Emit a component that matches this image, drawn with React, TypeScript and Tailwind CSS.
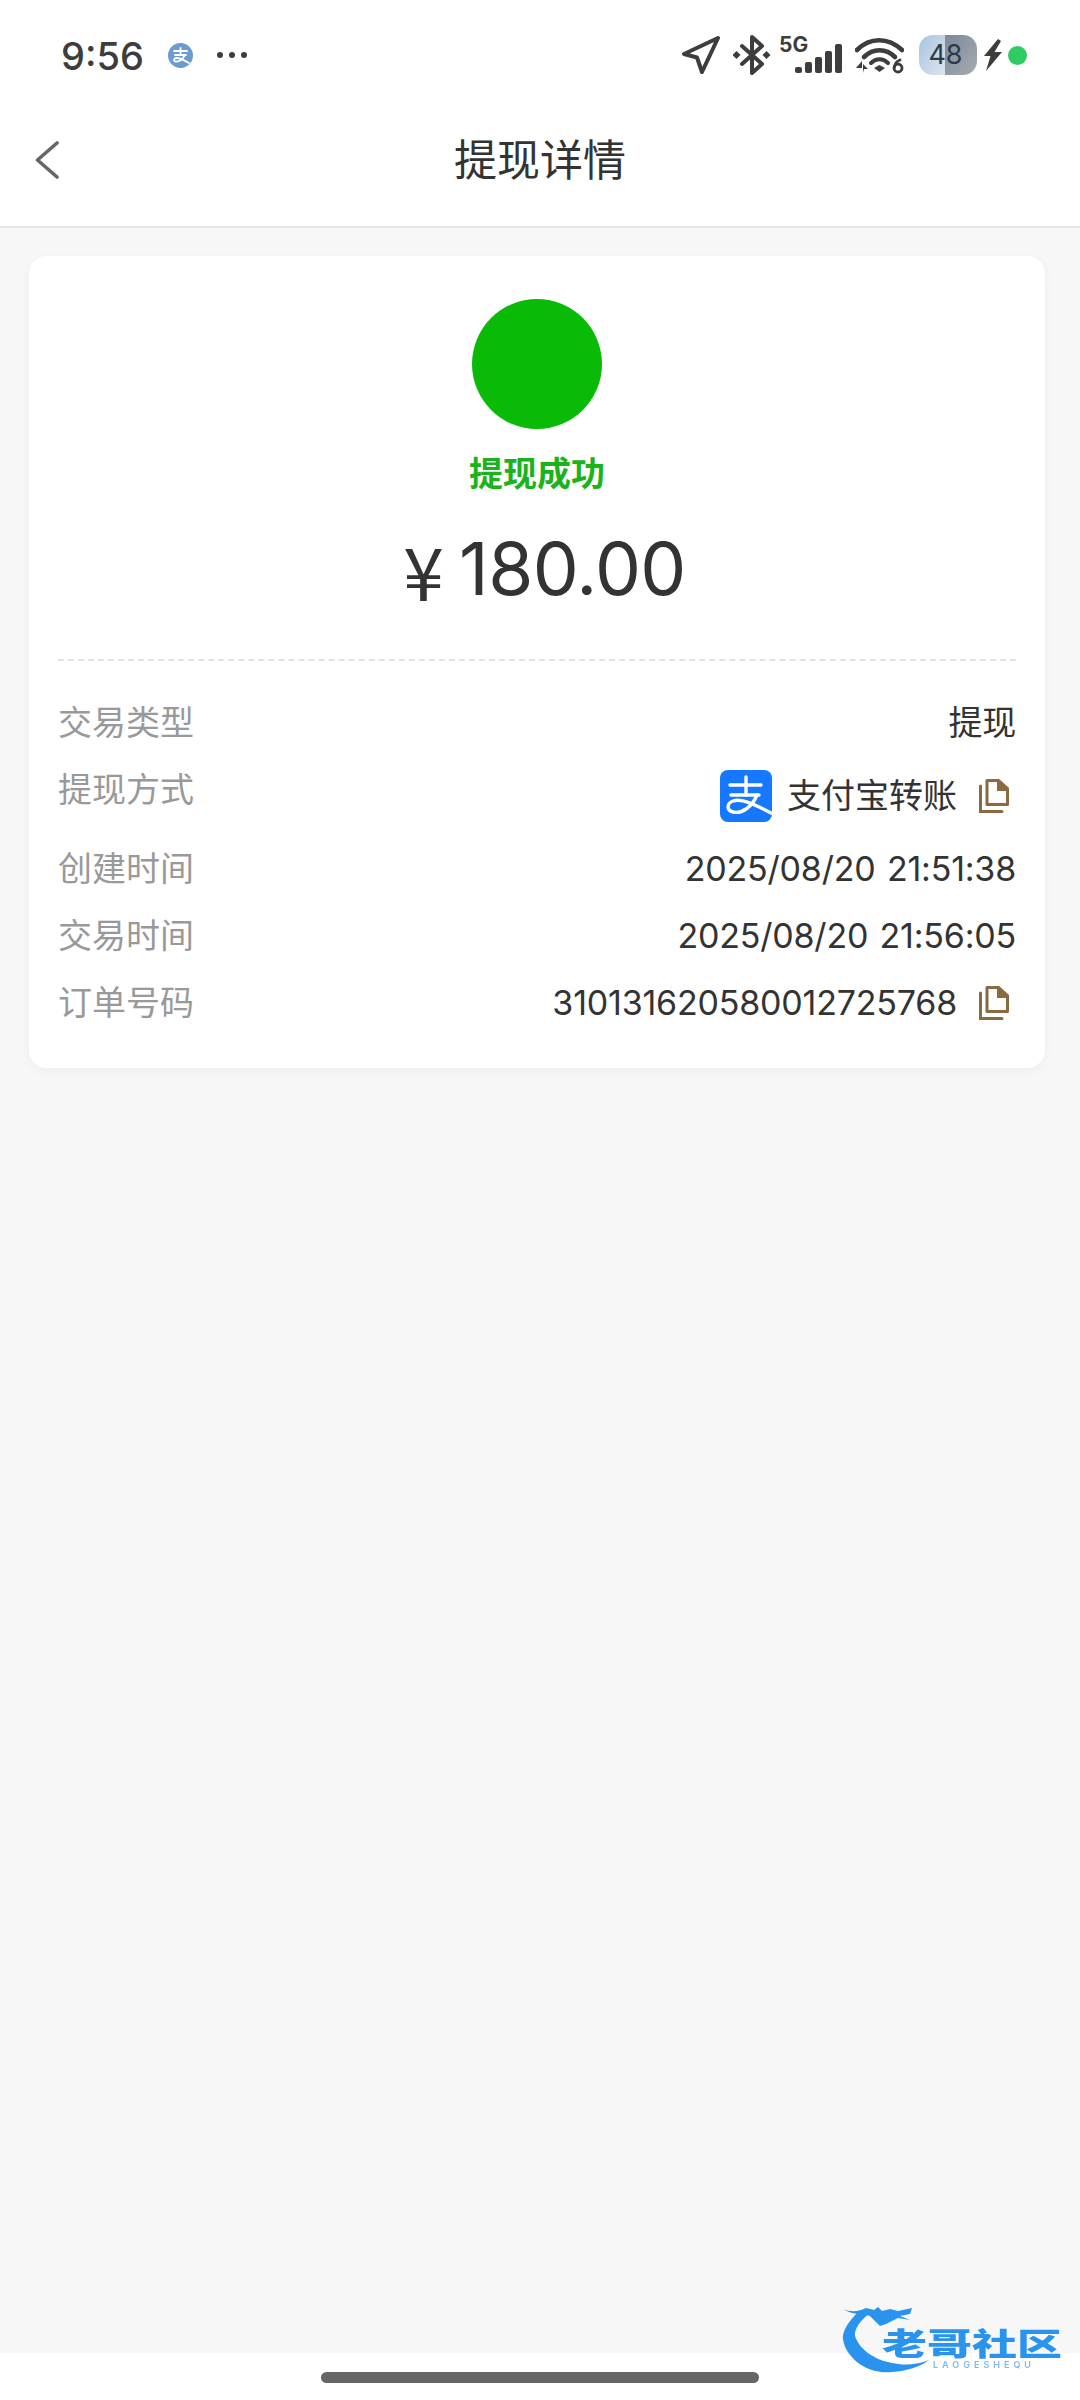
import React from "react";

const cjk = "font-['Inter','Noto_Sans_CJK_SC',sans-serif]";

const rows = [
  { label: "交易类型", value: "提现" },
  { label: "提现方式", value: "支付宝转账", alipay: true, copy: true },
  { label: "创建时间", value: "2025/08/20 21:51:38" },
  { label: "交易时间", value: "2025/08/20 21:56:05" },
  { label: "订单号码", value: "310131620580012725768", copy: true },
];

const CopyIcon = () => (
  <svg width="30" height="34" viewBox="0 0 30 34" fill="none" className="ml-[22px] mr-[7px] shrink-0">
    <path d="M8 1.5H19L28.5 10V25.5H8Z" stroke="#8a6a3f" strokeWidth="3" strokeLinejoin="round" />
    <path d="M18 0H20L30 9V12H18Z" fill="#8a6a3f" />
    <path d="M1.5 7V32.5H23" stroke="#8a6a3f" strokeWidth="3" strokeLinecap="round" />
  </svg>
);

const AlipayLogo = () => (
  <svg width="52" height="52" viewBox="0 0 52 52" className="mr-[15px] shrink-0">
    <rect width="52" height="52" rx="8" fill="#1677ff" />
    <g fill="none" stroke="#fff" strokeWidth="3.4" strokeLinecap="round">
      <path d="M10 15H41" />
      <path d="M26 7V25" />
      <path d="M11 25H39" />
      <path d="M37 25C32 37 22 44 13 42C6 40 7 33 13 31C22 28 36 35 51 43" />
    </g>
  </svg>
);

const StatusBar = () => (
  <div className="h-[110px] flex items-center pl-[61px] pr-[53px] text-[#3d3d3d]">
    <span className="text-[38px] leading-none font-medium mt-[2px] font-['Inter',sans-serif]">9:56</span>
    <svg width="25" height="25" viewBox="0 0 25 25" className="ml-[24px]">
      <circle cx="12.5" cy="12.5" r="12.5" fill="#6c9bcf" />
      <g fill="none" stroke="#fff" strokeWidth="1.8" strokeLinecap="round">
        <path d="M6 8H19M12.5 5V12M7 12H18" />
        <path d="M17 12C14 17 10 19 7.5 18.5C5 18 6 15 8.5 15C12 15 16 17 21 20" />
      </g>
    </svg>
    <div className="ml-[24px] flex gap-[6px]">
      <span className="w-[6px] h-[6px] rounded-full bg-[#3d3d3d]" />
      <span className="w-[6px] h-[6px] rounded-full bg-[#3d3d3d]" />
      <span className="w-[6px] h-[6px] rounded-full bg-[#3d3d3d]" />
    </div>

    <div className="ml-auto flex items-center">
      <svg width="38" height="38" viewBox="0 0 38 38" fill="none">
        <path d="M36 2L2 18L15 21.5L20 36Z" stroke="#3d3d3d" strokeWidth="4" strokeLinejoin="round" />
      </svg>
      <svg width="38" height="40" viewBox="0 0 38 40" fill="none" className="ml-[13px]">
        <path d="M9 11L29 29L19 38V2L29 11L9 29" stroke="#3d3d3d" strokeWidth="4" strokeLinejoin="round" strokeLinecap="round" />
        <path d="M3.5 16L7.500 20L3.5 24L-0.500 20Z" fill="#3d3d3d" />
        <path d="M33.500 16L37.500 20L33.500 24L29.500 20Z" fill="#3d3d3d" />
      </svg>
      <div className="relative ml-[8px] w-[63px] h-[36px] flex items-end">
        <span className="absolute left-0 top-[-1px] text-[21px] leading-[17px] font-bold font-['Inter',sans-serif]">5G</span>
        <div className="ml-[16px] flex items-end gap-[3px]">
          <span className="w-[7px] h-[6px] rounded-[2px] bg-[#3d3d3d]" />
          <span className="w-[7px] h-[11px] rounded-[2px] bg-[#3d3d3d]" />
          <span className="w-[7px] h-[16px] rounded-[2px] bg-[#3d3d3d]" />
          <span className="w-[7px] h-[22px] rounded-[2px] bg-[#3d3d3d]" />
          <span className="w-[7px] h-[29px] rounded-[2px] bg-[#3d3d3d]" />
        </div>
      </div>
      <svg width="49" height="37" viewBox="0 0 49 37" fill="none" className="ml-[13px]">
        <path d="M2 13C15 0 33 0 47 13" stroke="#3d3d3d" strokeWidth="4.6" strokeLinecap="round" />
        <path d="M9 20C18 11 31 11 40 20" stroke="#3d3d3d" strokeWidth="4.6" strokeLinecap="round" />
        <path d="M16 26C21 21 28 21 33 26" stroke="#3d3d3d" strokeWidth="4" strokeLinecap="round" />
        <path d="M19 31L24.500 28L30 31L24.500 35Z" fill="#3d3d3d" />
        <path d="M1 31H7V24ZM8 36V27L13 32H9Z" fill="#3d3d3d" />
        <circle cx="43" cy="31" r="4" stroke="#3d3d3d" strokeWidth="2.8" />
        <path d="M39.500 30C40 26 42 24 45 23" stroke="#3d3d3d" strokeWidth="2.8" strokeLinecap="round" />
      </svg>
      <div className="relative ml-[15px] w-[58px] h-[40px] rounded-[14px] overflow-hidden flex">
        <div className="w-[26px] bg-gradient-to-br from-[#a9c4e2] to-[#dbe4ec]" />
        <div className="flex-1 bg-gradient-to-br from-[#7d8a99] to-[#a6abb1]" />
        <span className="absolute inset-0 pr-[5px] flex items-center justify-center text-[27px] text-[#2e3a48] font-['Inter',sans-serif]">48</span>
      </div>
      <svg width="20" height="32" viewBox="0 0 20 32" className="ml-[6px]">
        <path d="M15 0L1 17H7.500L3 32L19 13H11.500L18 2Z" fill="#3d3d3d" />
      </svg>
      <span className="ml-[5px] w-[19px] h-[19px] rounded-full bg-[#2ecc63]" />
    </div>
  </div>
);

const Watermark = () => (
  <div className="absolute left-[842px] top-[2302px] w-[225px] h-[72px] blur-[0.5px]">
    <svg width="100" height="74" viewBox="0 0 100 74" className="absolute left-0 top-0">
      <path d="M16 10C7 19 0 29 1 37C3 55 25 73 50 70C65 69 78 65 87 58C72 64 60 63 50 61C34 58 18 49 13 34C12 26 20 17 28 11Z" fill="#2a93ee" />
      <path d="M1 7C10 11 18 9 24 6L32 8L36 5L40 9L48 7L56 9L70 6L68 12L58 14L68 18L56 16L44 22L38 24L28 14L20 12C12 12 6 10 1 7Z" fill="#2a93ee" />
    </svg>
    <span className="absolute left-[40px] top-[25px] w-[190px] text-[45px] leading-[30px] font-black text-[#2a93ee] whitespace-nowrap scale-y-[0.68] origin-center font-['Noto_Sans_CJK_SC',sans-serif]">
      老哥社区
    </span>
    <span className="absolute left-[91px] top-[58px] text-[9px] leading-[10px] font-semibold tracking-[4px] text-[#7db9ec] whitespace-nowrap font-['Inter',sans-serif]">
      LAOGESHEQU
    </span>
  </div>
);

const App = () => {
  return (
    <div className={`relative w-[1080px] h-[2400px] bg-[#f7f7f7] flex flex-col overflow-hidden ${cjk}`}>
      <div className="bg-white border-b-2 border-[#e5e5e5]">
        <StatusBar />
        <div className="relative h-[116px] pb-[16px] flex items-center justify-center">
          <svg width="26" height="38" viewBox="0 0 26 38" fill="none" className="absolute left-[34px] top-[31px]">
            <path d="M23 2L3.500 19L23 36" stroke="#666" strokeWidth="3.6" strokeLinecap="round" strokeLinejoin="round" />
          </svg>
          <span className="text-[43px] leading-none text-[#333]">提现详情</span>
        </div>
      </div>

      <div className="mx-[29px] mt-[28px] w-[1016px] rounded-[18px] bg-white shadow-[0_3px_12px_rgba(0,0,0,0.04)] px-[29px] pt-[43px] pb-[42px]">
        <div className="flex flex-col items-center border-b-2 border-dashed border-[#e2e2e2] pb-[40px]">
          <div className="w-[130px] h-[130px] rounded-full bg-[#09bb07]" />
          <div className="mt-[22px] text-[34px] leading-[46px] font-bold text-[#1bb31b]">提现成功</div>
          <div className="mt-[22px] ml-[15px] text-[73px] leading-[100px] tracking-[-0.6px] text-[#333] flex items-center">
            <span className="mr-[16px] font-['Noto_Sans_CJK_SC',sans-serif]">¥</span>180.00
          </div>
        </div>

        <div className="mt-[39px] flex flex-col gap-[21px] text-[34px] leading-[46px]">
          {rows.map((row) => (
            <div key={row.label} className="flex items-start justify-between">
              <span className="text-[#999]">{row.label}</span>
              <div className="flex items-center text-[#333] tracking-[-0.2px] [word-spacing:2px]">
                {row.alipay && <AlipayLogo />}
                <span className={row.alipay ? "leading-[58px] tracking-normal" : ""}>{row.value}</span>
                {row.copy && <CopyIcon />}
              </div>
            </div>
          ))}
        </div>
      </div>

      <div className="mt-auto h-[47px] bg-white flex justify-center pt-[19px]">
        <div className="w-[438px] h-[11px] rounded-full bg-[#666]" />
      </div>
      <Watermark />
    </div>
  );
};

export default App;
